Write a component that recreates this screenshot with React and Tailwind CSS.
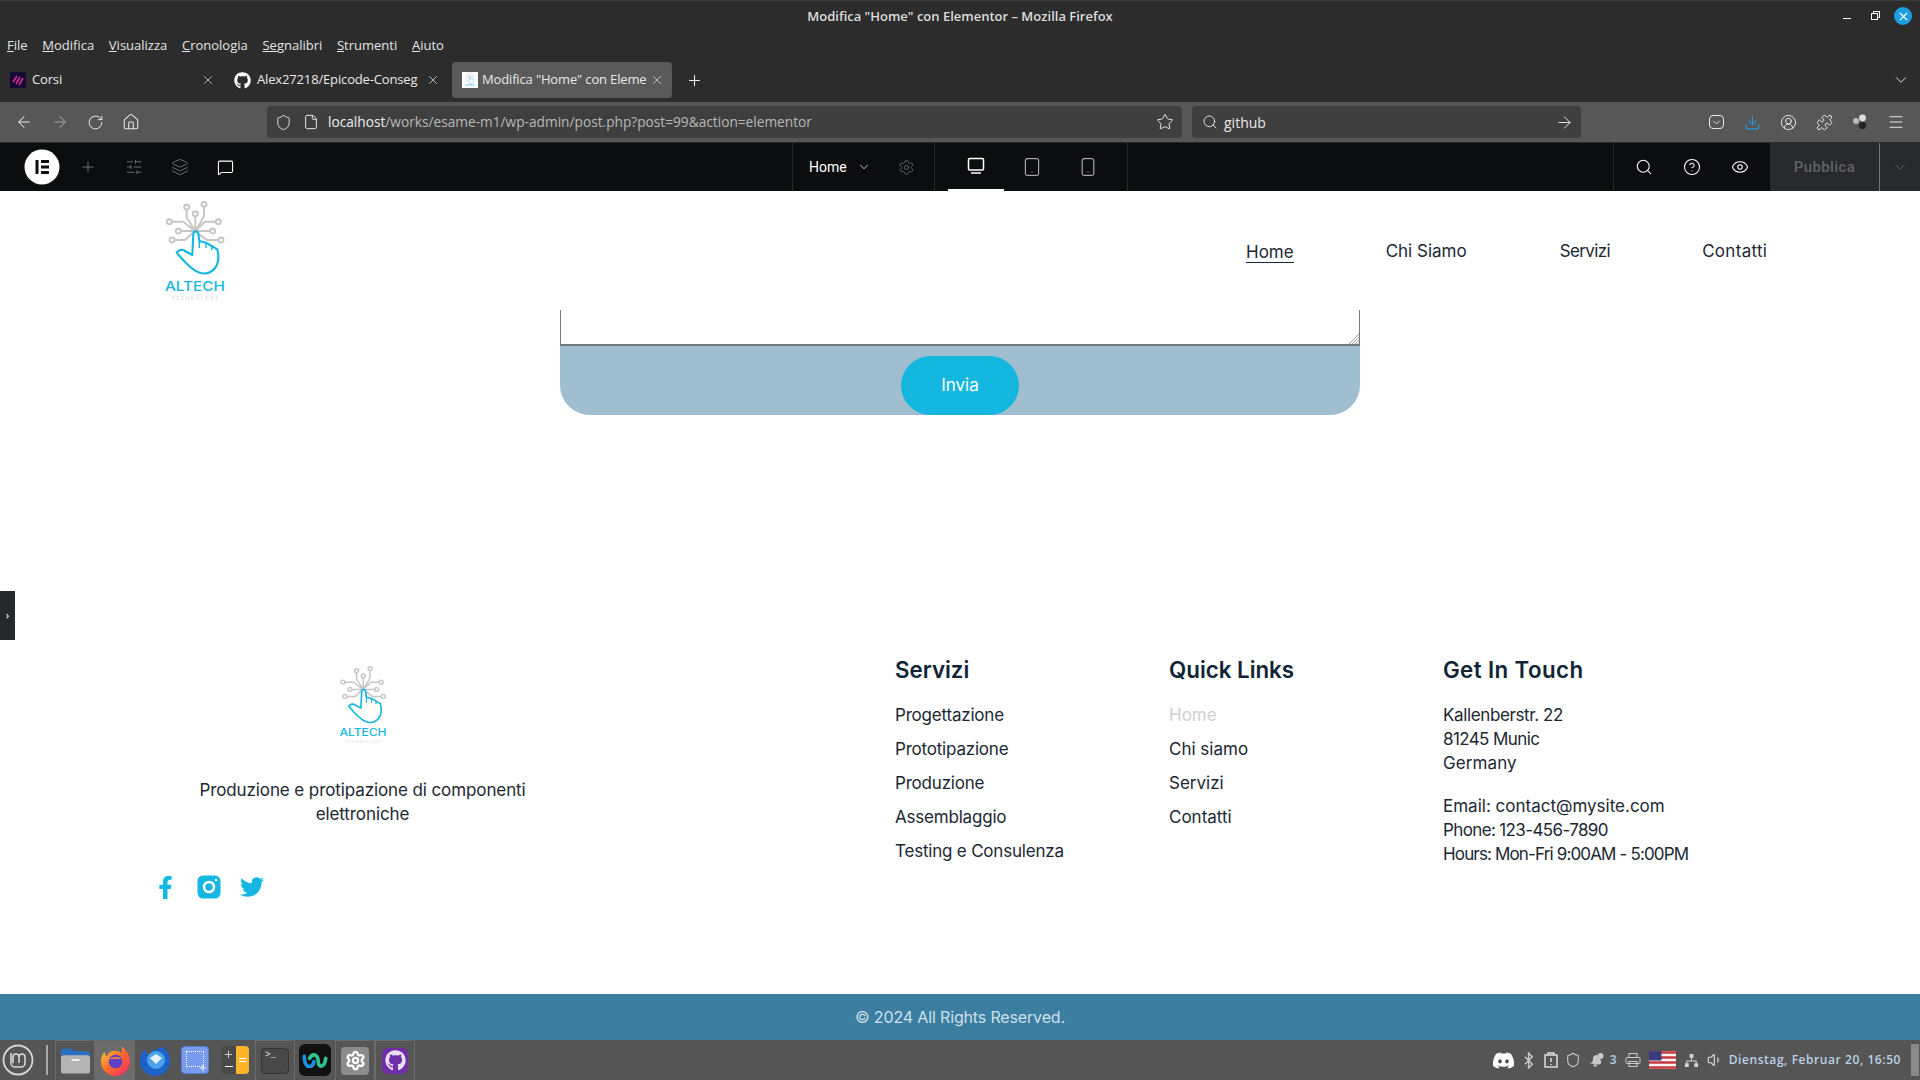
import {
  ArrowLeft, ArrowRight, ChevronDown, CircleHelp, CircleUserRound, Download, Eye, File, House, Layers, Menu,
  MessageSquare, Plus, Puzzle, RotateCw, Search, Settings, Shield, SlidersHorizontal, Smartphone, Star, Tablet, Volume1, X,
} from "lucide-react";
import { FaDiscord, FaFacebookF, FaGithub, FaTwitter } from "react-icons/fa";

const ui = "font-['Open_Sans',sans-serif]";
const page = "font-['Inter',sans-serif]";

function AltechLogo({ className }) {
  const nodes = [[21.7, 6], [39, 3.3], [30.3, 12.7], [4.3, 20.7], [53.3, 20.7], [13.3, 30], [47.7, 30], [7, 39], [56, 39]];
  return (
    <svg viewBox="0 0 60 100" className={className}>
      <g fill="none" stroke="#c6c6c6" strokeWidth="1.9">
        <path d="M30.3 30 L24 20 L21.7 17 V8 M30.3 30 L37 19 L39 15 V6 M30.3 30 V15 M30 30 L18 20.7 H6.5 M30 30 L40 20.7 H51 M30 30 H16 M32 30 H45 M30 30 L20 39 H9 M31 31 L42 39 H54" />
        {nodes.map(([x, y]) => (
          <circle key={x + "-" + y} cx={x} cy={y} r="2.5" fill="#fff" />
        ))}
      </g>
      <path
        d="M11.7 51.7 C14 48.5 18 48 20 50 L27.3 54 L28.3 33 C28.6 29.5 33 29.5 33.3 33 L34.3 40 L41 41.7 L46.7 45 L52.3 48.3 C54 55 54 62 50 67 C46 72 40 73.5 34 71.5 C28 69.5 22 64 11.7 51.7 Z"
        fill="#fff"
        stroke="#14b7e0"
        strokeWidth="2.1"
        strokeLinejoin="round"
      />
      <path d="M34.3 40 V47 M41 41.7 V47 M46.7 45 V49" stroke="#14b7e0" strokeWidth="1.4" fill="none" />
      <text x="0" y="90" textLength="60" lengthAdjust="spacingAndGlyphs" fontSize="13.5" fontFamily="Inter, sans-serif" fontWeight="500" fill="#14b7e0">ALTECH</text>
      <text x="7" y="98.7" textLength="46" fontSize="4.6" fontFamily="Inter, sans-serif" fill="#d4d4d4">TECHNOLOGY</text>
    </svg>
  );
}

function Tab({ icon, label, active, width }) {
  return (
    <div className={`flex items-center h-9 rounded pl-2.5 pr-2 gap-1.5 ${width} ${active ? "bg-[#5a5a5a]" : ""}`}>
      {icon}
      <span className="flex-1 min-w-0 whitespace-nowrap text-[13px] tracking-[-0.15px] text-[#e8e8e8]">{label}</span>
      <X size={14} strokeWidth={1.3} className="text-[#e2e2e2] shrink-0" />
    </div>
  );
}

function BrowserChrome() {
  const menu = [["F", "ile"], ["M", "odifica"], ["V", "isualizza"], ["C", "ronologia"], ["Se", "gnalibri"], ["S", "trumenti"], ["A", "iuto"]];
  return (
    <div className={`${ui} shrink-0`}>
      <div className="bg-[#2c2c2c] border-t border-[#3a3a3a] h-[102px] flex flex-col">
        <div className="h-[31px] relative flex items-center justify-center text-[13px] font-semibold text-[#dcdcdc]">
          Modifica "Home" con Elementor – Mozilla Firefox
          <div className="absolute right-[8px] top-[6px] flex items-center">
            <div className="w-2 h-px bg-white mt-[5px]" />
            <div className="w-[7px] h-[7px] border border-white ml-5 shadow-[2px_-2px_0_-1px_#2c2c2c,2px_-2px_0_0_#fff]" />
            <div className="w-[18px] h-[18px] rounded-full bg-[#1c9ee0] flex items-center justify-center ml-4">
              <X size={13} className="text-white" />
            </div>
          </div>
        </div>
        <div className="h-[30px] flex items-center pl-[7px] gap-[14.7px] pb-[2px] text-[13px] text-[#e4e4e4]">
          {menu.map(([u, rest]) => (
            <span key={u + rest}><span className="underline">{u}</span>{rest}</span>
          ))}
        </div>
        <div className="h-9 flex items-center pr-[10px]">
          <Tab
            width="w-[223px]"
            label="Corsi"
            icon={
              <svg viewBox="0 0 16 16" className="w-4 h-4 shrink-0">
                <rect width="16" height="16" fill="#150a33" />
                <path d="M3 10l4-6M6 12l4-7M9 13l4-7" stroke="#d62b9c" strokeWidth="1.6" />
              </svg>
            }
          />
          <Tab width="w-[224px] ml-[1px]" label="Alex27218/Epicode-Conseg" icon={<FaGithub size={17} className="text-white shrink-0" />} />
          <Tab
            active
            width="w-[220px] ml-[4px]"
            label='Modifica "Home" con Eleme'
            icon={<div className="w-4 h-4 bg-white flex items-center justify-center shrink-0 -mr-[2px]"><AltechLogo className="h-4" /></div>}
          />
          <Plus size={17} strokeWidth={1.5} className="text-[#eee] ml-[14px]" />
          <div className="flex-1" />
          <ChevronDown size={18} strokeWidth={1.3} className="text-[#ddd]" />
        </div>
      </div>
      <div className="bg-[#575757] h-[41px] border-b border-[#2a2a2a] flex items-center text-[#e8e8e8]">
        <div className="w-[267px] flex items-center pl-[15px] gap-[18px]">
          <ArrowLeft size={18} strokeWidth={1.4} />
          <ArrowRight size={18} strokeWidth={1.4} className="text-[#a0a0a0]" />
          <RotateCw size={17} strokeWidth={1.4} />
          <House size={18} strokeWidth={1.4} />
        </div>
        <div className="w-[915px] h-8 rounded bg-[#3f3f3f] flex items-center pl-2 pr-2 text-[13.7px]">
          <Shield size={17} strokeWidth={1.3} />
          <File size={16} strokeWidth={1.5} className="ml-[11px]" />
          <span className="flex-1 ml-[9px] pt-[1px] text-[#b8b8b8]"><span className="text-[#eee]">localhost</span>/works/esame-m1/wp-admin/post.php?post=99&amp;action=elementor</span>
          <Star size={18} strokeWidth={1.3} />
        </div>
        <div className="ml-[10px] w-[389px] h-8 rounded bg-[#3f3f3f] flex items-center pl-2.5 pr-[7px] gap-[6px] text-[14px]">
          <Search size={16} strokeWidth={1.4} />
          <span className="flex-1">github</span>
          <ArrowRight size={19} strokeWidth={1.2} />
        </div>
        <div className="flex-1 flex items-center justify-end gap-[19px] pr-[15px]">
          <div className="w-[15px] h-[14px] rounded-[4px] border border-[#e8e8e8] flex items-center justify-center -ml-1 mr-[1px]"><ChevronDown size={11} /></div>
          <Download size={17} strokeWidth={1.5} className="text-[#1c9ee0]" />
          <CircleUserRound size={17} strokeWidth={1.4} />
          <Puzzle size={17} strokeWidth={1.4} />
          <svg viewBox="0 0 16 16" className="w-4 h-4">
            <circle cx="4" cy="7" r="3" fill="#bbb" />
            <circle cx="10.5" cy="4" r="3.4" fill="#ddd" />
            <circle cx="10.5" cy="11.5" r="3.6" fill="#222" />
          </svg>
          <Menu size={18} strokeWidth={1.4} />
        </div>
      </div>
    </div>
  );
}

function ElementorBar() {
  return (
    <div className="bg-[#0c0d0e] h-12 shrink-0 flex items-center text-white relative font-['Roboto',sans-serif]">
      <div className="w-[792px] h-full flex items-center pl-6 gap-[28px] text-[#6d7882]">
        <svg viewBox="0 0 36 36" className="w-[36px] h-[36px] -mr-[9px] shrink-0">
          <circle cx="18" cy="18" r="17.5" fill="#fff" />
          <path d="M11.5 11h3v14h-3zM17 11h8v3h-8zM17 16.5h8v3h-8zM17 22h8v3h-8z" fill="#0c0d0e" />
        </svg>
        <Plus size={18} strokeWidth={1.2} />
        <SlidersHorizontal size={18} strokeWidth={1.2} />
        <Layers size={18} strokeWidth={1.2} />
        <MessageSquare size={17} strokeWidth={1.5} className="text-white" />
      </div>
      <div className="w-[143px] h-full border-x border-[#26292c] flex items-center pl-4 text-[14px]">
        Home
        <ChevronDown size={14} strokeWidth={1.3} className="ml-[10px]" />
        <Settings size={17} strokeWidth={1.1} className="ml-[27px] text-[#6d7882]" />
      </div>
      <div className="w-[193px] h-full border-r border-[#26292c] flex items-center text-[#c6c9cc]">
        <div className="w-[56px] ml-[13px] h-full flex items-center justify-center border-b-[2px] border-white text-white relative">
          <svg viewBox="0 0 20 20" className="w-5 h-5" fill="none" stroke="currentColor" strokeWidth="1.5">
            <rect x="2.5" y="2.5" width="15" height="11.5" rx="1" />
            <path d="M5 17h10" />
          </svg>
        </div>
        <div className="w-[56px] flex justify-center"><Tablet size={20} strokeWidth={1.2} /></div>
        <div className="w-[56px] flex justify-center"><Smartphone size={20} strokeWidth={1.2} /></div>
      </div>
      <div className="flex-1" />
      <div className="w-[157px] h-full border-l border-[#26292c] flex items-center pl-[21px] gap-[30px]">
        <Search size={18} strokeWidth={1.4} />
        <CircleHelp size={18} strokeWidth={1.4} />
        <Eye size={18} strokeWidth={1.4} />
      </div>
      <div className="w-[109px] h-full bg-[#27292c] flex items-center justify-center text-[15px] font-medium tracking-[0.4px] text-[#5f6265]">Pubblica</div>
      <div className="w-[41px] h-full bg-[#27292c] border-l border-[#6d7882] flex items-center justify-center text-[#5f6265]">
        <ChevronDown size={18} strokeWidth={1.3} />
      </div>
    </div>
  );
}

function SiteHeader() {
  return (
    <header className="h-[119px] flex items-center pl-[165px] text-[#1b2733] text-[17px]">
      <AltechLogo className="w-[60px] h-[100px] shrink-0" />
      <nav className="ml-[1021px] mt-[3px] flex items-center">
        <a className="border-b border-[#1b2733] leading-[20px]">Home</a>
        <a className="ml-[92px]">Chi Siamo</a>
        <a className="ml-[93px] tracking-[-0.6px]">Servizi</a>
        <a className="ml-[92px] tracking-[0.3px]">Contatti</a>
      </nav>
    </header>
  );
}

function ContactForm() {
  return (
    <div className="w-[800px] h-[105px] mx-auto bg-[#9fbfd1] rounded-b-[30px] flex flex-col items-center overflow-hidden">
      <div className="w-full h-[36px] bg-white border-x border-b-2 border-[#767a7d] border-t-0 relative">
        <svg viewBox="0 0 12 12" className="absolute right-0 bottom-0 w-3 h-3" stroke="#8a8a8a" strokeWidth="0.8">
          <path d="M2 12L12 2M5 12l7-7M8 12l4-4M10.5 12l1.5-1.5" />
        </svg>
      </div>
      <button className="mt-[10px] w-[118px] h-[59px] rounded-[30px] bg-[#14b7e0] text-white text-[17px]">Invia</button>
    </div>
  );
}

function FooterCol({ title, titleClass, children }) {
  return (
    <div className="w-[274px]">
      <h3 className={`text-[22.3px] leading-[32px] font-semibold text-[#0f2436] mb-[17px] ${titleClass}`}>{title}</h3>
      {children}
    </div>
  );
}

function Footer() {
  const servizi = ["Progettazione", "Prototipazione", "Produzione", "Assemblaggio", "Testing e Consulenza"];
  const links = ["Home", "Chi siamo", "Servizi", "Contatti"];
  return (
    <footer className="flex-1 flex flex-col">
      <div className="flex-1 flex pl-[160px] pt-[239px] text-[17px] text-[#1b2733]">
        <div className="w-[735px] mt-[12px]">
          <div className="w-[405px] flex flex-col items-center text-center leading-[24px] tracking-[-0.1px]">
            <AltechLogo className="w-[48px] h-[78px]" />
            <p className="mt-[34px]">Produzione e protipazione di componenti<br />elettroniche</p>
          </div>
          <div className="flex items-center gap-[20px] mt-[49px] -ml-[6px] text-[#14b7e0]">
            <FaFacebookF size={23} />
            <svg viewBox="0 0 24 24" className="w-[24px] h-[24px]">
              <rect x="0.5" y="0.5" width="23" height="23" rx="5.5" fill="#14b7e0" />
              <circle cx="12" cy="12" r="5" fill="none" stroke="#fff" strokeWidth="2.6" />
              <circle cx="19" cy="5" r="1.3" fill="#fff" />
            </svg>
            <FaTwitter size={24} className="-ml-[1px]" />
          </div>
        </div>
        <FooterCol title="Servizi">
          <ul className="flex flex-col gap-[10px] leading-[24px] tracking-[-0.2px]">
            {servizi.map((s) => <li key={s}>{s}</li>)}
          </ul>
        </FooterCol>
        <FooterCol title="Quick Links">
          <ul className="flex flex-col gap-[10px] leading-[24px]">
            {links.map((s, i) => <li key={s} className={i === 0 ? "text-[#cfcfcf]" : ""}>{s}</li>)}
          </ul>
        </FooterCol>
        <FooterCol title="Get In Touch" titleClass="tracking-[0.4px]">
          <div className="leading-[24px] whitespace-nowrap">
            <p className="tracking-[-0.38px]">Kallenberstr. 22</p>
            <p className="tracking-[-0.6px]">81245 Munic</p>
            <p className="tracking-[0.1px]">Germany</p>
            <p className="mt-[19px]">Email: contact@mysite.com</p>
            <p className="tracking-[-0.63px]">Phone: 123-456-7890</p>
            <p className="tracking-[-0.85px]">Hours: Mon-Fri 9:00AM - 5:00PM</p>
          </div>
        </FooterCol>
      </div>
      <div className="h-[46px] shrink-0 bg-[#3b7ea1] flex items-center justify-center text-[16px] tracking-[-0.15px] text-[#cfe0ea]">© 2024 All Rights Reserved.</div>
    </footer>
  );
}

function DockCell({ outlined, active, children }) {
  return (
    <div className={`w-10 h-10 flex items-center justify-center ${outlined ? "border-x border-t border-[#6a6a6a]" : ""} ${active ? "bg-[#6c6c6c]" : ""}`}>
      {children}
    </div>
  );
}

function Taskbar() {
  return (
    <div className={`${ui} h-10 shrink-0 bg-[#555] flex items-center`}>
      <svg viewBox="0 0 32 32" className="w-8 h-8 ml-[2px]" fill="none" stroke="#d6d6d6" strokeWidth="1.8">
        <circle cx="16" cy="16" r="14.5" />
        <path d="M9 9v10a4 4 0 0 0 4 4h6a4 4 0 0 0 4-4v-6a3 3 0 0 0-6 0v6m0-6a3 3 0 0 0-6 0v6" strokeWidth="1.6" />
      </svg>
      <div className="w-[2px] h-[30px] bg-[#aaa] ml-[12px] mr-[7px]" />
      <div className="flex items-center">
        <DockCell outlined>
          <svg viewBox="0 0 32 28" className="w-[31px] h-[28px]">
            <path d="M1 4a3 3 0 0 1 3-3h8l3 3h13a3 3 0 0 1 3 3v4H1z" fill="#2a6fc0" />
            <rect x="1" y="8" width="30" height="19" rx="3" fill="#b4b4b4" />
            <rect x="12" y="12" width="8" height="2" fill="#f2f2f2" />
          </svg>
        </DockCell>
        <DockCell outlined active>
          <svg viewBox="0 0 32 32" className="w-[31px] h-[31px]">
            <defs>
              <linearGradient id="ffx" x1="0" y1="0" x2="1" y2="1">
                <stop offset="0" stopColor="#ffd43a" />
                <stop offset="0.5" stopColor="#ff6a2a" />
                <stop offset="1" stopColor="#e8266f" />
              </linearGradient>
            </defs>
            <path d="M22 1c6 5 9 10 9 16a15 15 0 0 1-30 0c0-4 1-7 4-10 0 3 1 4 2 5 1-4 5-6 9-6 3 0 5 1 6 3 1-3 1-5 0-8z" fill="url(#ffx)" />
            <circle cx="16" cy="17" r="7" fill="#5b3fc4" />
            <path d="M9 15c3-3 10-4 13 0-4-1-9-1-13 0z" fill="#ff8a2a" />
          </svg>
        </DockCell>
        <DockCell>
          <svg viewBox="0 0 32 32" className="w-[32px] h-[32px]">
            <path d="M24 3c5 4 7 9 7 14a15 15 0 0 1-30 0C1 12 3 8 6 5c0 3 2 5 4 6 2-4 7-6 14-8z" fill="#1c62c8" />
            <circle cx="17" cy="16" r="9" fill="#4aa3ea" />
            <path d="M11 14l6-4 6 4-6 6z" fill="#e8f2fc" />
          </svg>
        </DockCell>
        <DockCell>
          <div className="w-7 h-7 rounded-[4px] bg-[#7a9cf0] border border-[#5b7bd0] relative">
            <div className="absolute left-[4px] top-[4px] w-[18px] h-[16px] border border-dotted border-white" />
            <Plus size={10} strokeWidth={2} className="absolute right-0 bottom-0 text-white" />
          </div>
        </DockCell>
        <DockCell>
          <div className="w-7 h-7 flex">
            <div className="w-[15px] rounded-l-[4px] bg-[#4a4a4a] flex flex-col items-center justify-around text-white">
              <Plus size={11} strokeWidth={1.6} />
              <div className="w-[8px] h-px bg-white mb-[4px]" />
            </div>
            <div className="w-[13px] rounded-r-[4px] bg-[#fbb62c] flex flex-col items-center justify-center gap-[2px]">
              <div className="w-[7px] h-px bg-white" />
              <div className="w-[7px] h-px bg-white" />
            </div>
          </div>
        </DockCell>
        <DockCell outlined>
          <div className="w-7 h-[26px] rounded-[4px] bg-[#484848] border border-[#333] text-[#eee] text-[9px] leading-[12px] pl-[3px] font-mono">&gt;_</div>
        </DockCell>
        <DockCell>
          <div className="w-8 h-8 rounded-[6px] bg-[#111] flex items-center justify-center">
            <svg viewBox="0 0 24 14" className="w-[26px] h-[15px]" fill="none" strokeWidth="3.4" strokeLinecap="round">
              <path d="M2 3c0 12 8 12 9 5" stroke="#1d8fe0" />
              <path d="M7 5c3-6 8-3 8 3s6 6 7-3" stroke="#2fc48d" />
            </svg>
          </div>
        </DockCell>
        <DockCell outlined>
          <div className="w-7 h-7 rounded-[4px] bg-[#8c8c8c] flex items-center justify-center">
            <Settings size={21} strokeWidth={2.6} className="text-white" />
          </div>
        </DockCell>
        <DockCell outlined>
          <div className="w-[26px] h-[26px] rounded-[6px] bg-[#6f2da8] flex items-center justify-center">
            <FaGithub size={21} className="text-[#e8dff0]" />
          </div>
        </DockCell>
      </div>
      <div className="flex-1" />
      <div className="flex items-center text-[#dadada]">
        <FaDiscord size={23} className="text-white mr-[8px]" />
        <svg viewBox="0 0 14 18" className="w-[13px] h-[17px] mr-[8px]" fill="none" stroke="#c8c8c8" strokeWidth="1.6"><path d="M2 5l8 8-4 4V1l4 4-8 8" /></svg>
        <svg viewBox="0 0 14 16" className="w-[14px] h-[16px] mr-[7px]" fill="none" stroke="#ddd" strokeWidth="1.5"><rect x="1" y="3" width="12" height="12" /><path d="M4 3V1h6v2M7 6v4M7 12v1" /></svg>
        <Shield size={16} strokeWidth={1.6} className="mr-[8px] text-[#c8c8c8]" />
        <svg viewBox="0 0 16 16" className="w-[16px] h-[16px]" fill="#c8c8c8"><path d="M1 11.5c2.5-1 3.500-3.500 3-6 1-2 3-3 4.500-2l3.500 5c1 1.500 0 3.500-2 4zM4 13l3-1 1 2-2 1z" /><circle cx="11.5" cy="4" r="3" /></svg>
        <span className="ml-[5px] mr-[8px] text-[12px] font-bold text-[#9cc0de]">3</span>
        <svg viewBox="0 0 16 16" className="w-4 h-4 mr-[8px]" fill="none" stroke="#ccc" strokeWidth="1"><rect x="4" y="1.5" width="8" height="4" /><rect x="1" y="5.5" width="14" height="6" rx="1" /><rect x="4" y="9.5" width="8" height="5" /></svg>
        <svg viewBox="0 0 26 17" className="w-[27px] h-[18px] mr-[8px]">
          <rect width="26" height="17" fill="#f4f4f4" />
          <path d="M0 0h26v2.4H0zM0 4.8h26v2.4H0zM0 9.7h26v2.4H0zM0 14.6h26V17H0z" fill="#c8393f" />
          <rect width="12" height="9" fill="#3c3b7e" />
        </svg>
        <svg viewBox="0 0 16 16" className="w-[15px] h-[15px] mr-[8px]" fill="#d4d4d4"><path d="M6 1h4v4H6zM1 11h4v4H1zM11 11h4v4h-4zM7.5 5h1v3h5v3h-1V9H3.5v2h-1V8h5z" /></svg>
        <Volume1 size={16} className="mr-[6px] text-[#c8c8c8]" />
        <span className="text-[12px] font-semibold tracking-[0.57px] text-[#bcd2e6] mr-[10px]">Dienstag, Februar 20, 16:50</span>
        <div className="w-[8px] h-[32px] bg-[#8a8a8a] mr-[1px]" />
      </div>
    </div>
  );
}

export default function App() {
  return (
    <div className="w-[1920px] h-[1080px] overflow-hidden flex flex-col bg-white relative">
      <BrowserChrome />
      <ElementorBar />
      <main className={`${page} flex-1 flex flex-col`}>
        <SiteHeader />
        <ContactForm />
        <Footer />
      </main>
      <Taskbar />
      {/* elementor side panel handle */}
      <div className="absolute left-0 top-[591px] w-[15px] h-[49px] bg-[#26292c] flex items-center justify-center text-white text-[11px]">›</div>
    </div>
  );
}
